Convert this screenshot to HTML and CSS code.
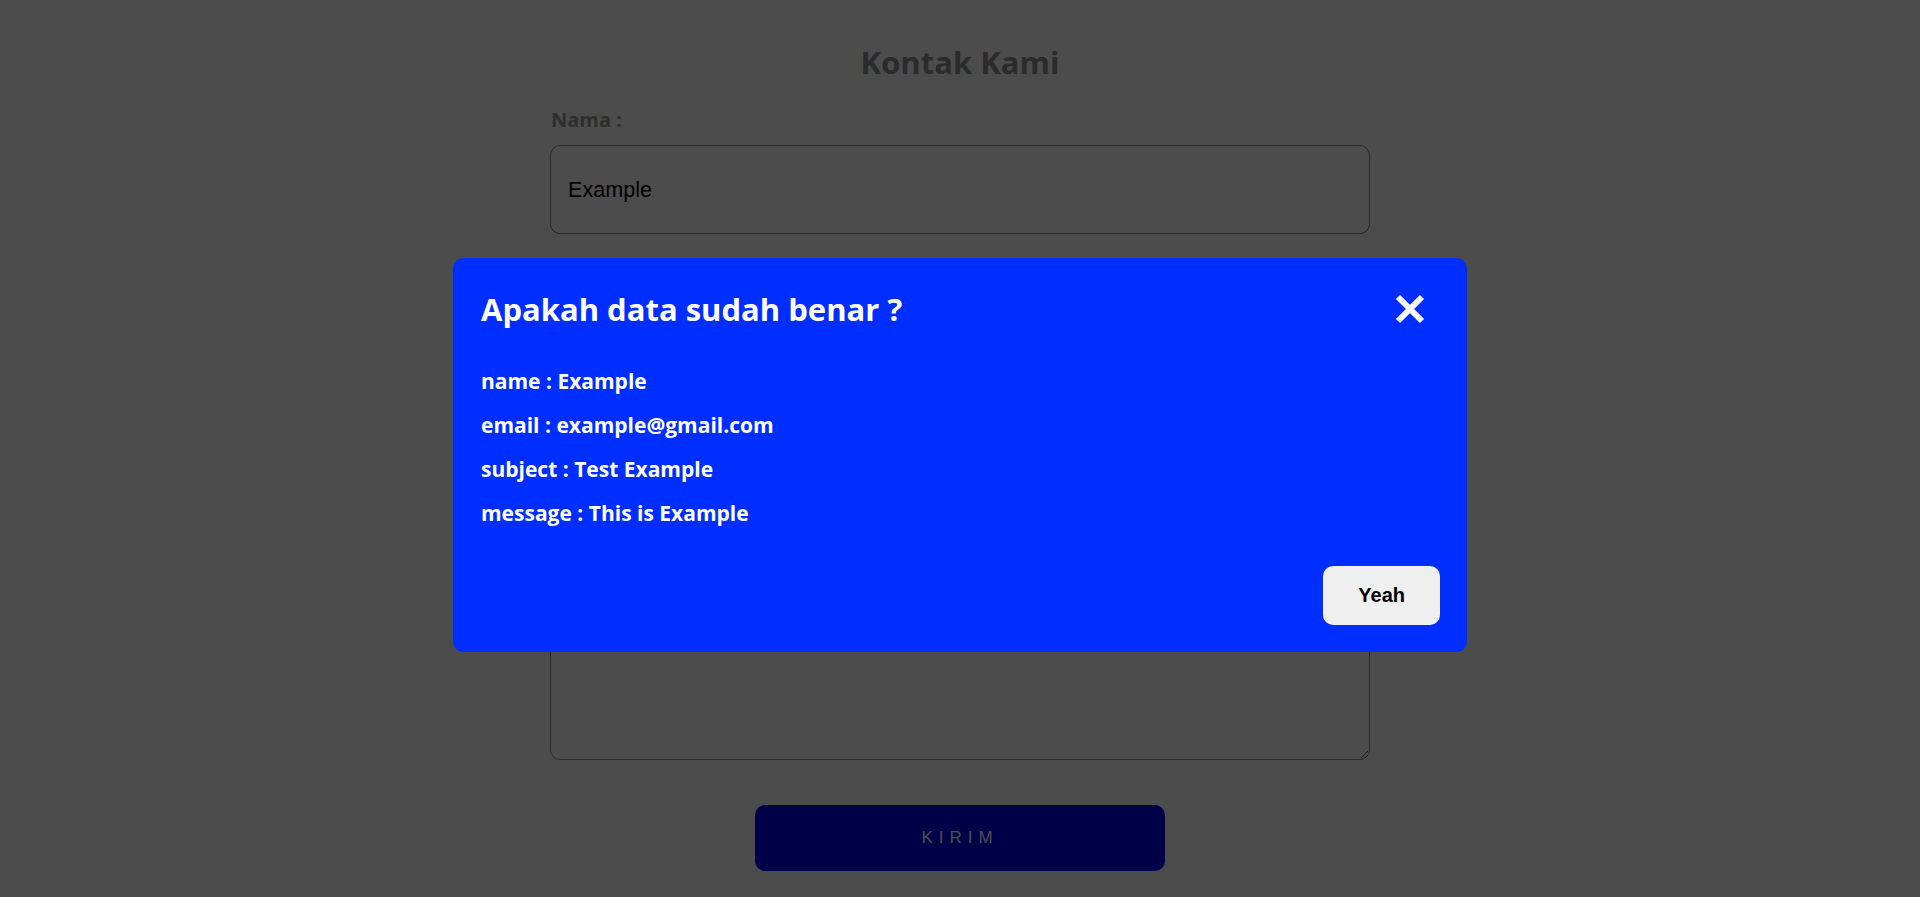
FILE: index.html
```html
<!DOCTYPE html>
<html lang="id">
<head>
<meta charset="utf-8">
<title>Kontak Kami</title>
<link rel="stylesheet" href="styles.css">
</head>
<body>
<main class="page">
  <h1 class="page-title">Kontak Kami</h1>
  <form class="contact-form">
    <div class="field">
      <label class="field-label" for="nama">Nama :</label>
      <input class="field-input" id="nama" type="text" value="Example">
    </div>
    <div class="field">
      <label class="field-label" for="email">Email :</label>
      <input class="field-input" id="email" type="text">
    </div>
    <div class="field">
      <label class="field-label" for="subjek">Subjek :</label>
      <input class="field-input" id="subjek" type="text">
    </div>
    <div class="field">
      <label class="field-label" for="pesan">Pesan :</label>
      <textarea class="field-textarea" id="pesan"></textarea>
    </div>
    <div class="submit-row">
      <button class="submit-btn" type="button">KIRIM</button>
    </div>
  </form>
</main>

<div class="overlay">
  <div class="modal">
    <div class="modal-header">
      <h2 class="modal-title">Apakah data sudah benar ?</h2>
      <button class="modal-close" type="button" aria-label="Tutup">
        <svg width="32" height="32" viewBox="0 0 32 32"><path d="M4 4 L28 28 M28 4 L4 28" stroke="#fff" stroke-width="6" fill="none"/></svg>
      </button>
    </div>
    <div class="modal-body">
      <p class="modal-item">name : Example</p>
      <p class="modal-item">email : example@gmail.com</p>
      <p class="modal-item">subject : Test Example</p>
      <p class="modal-item">message : This is Example</p>
    </div>
    <div class="modal-footer">
      <button class="modal-ok" type="button">Yeah</button>
    </div>
  </div>
</div>
</body>
</html>
```

FILE: styles.css
```css
* { box-sizing: border-box; }

body {
  margin: 0;
  background: #ffffff;
  font-family: "Open Sans", "Noto Sans", sans-serif;
  height: 897px;
  overflow: hidden;
}

.page {
  width: 820px;
  margin: 0 auto;
  padding-top: 40px;
}

.page-title {
  margin: 0;
  text-align: center;
  font-size: 31px;
  line-height: 44px;
  font-weight: 700;
  color: #8f8f8f;
}

.contact-form {
  display: flex;
  flex-direction: column;
  margin-top: 24px;
}

.field {
  display: flex;
  flex-direction: column;
  margin-bottom: 30px;
}

.field-label {
  font-size: 20px;
  line-height: 24px;
  font-weight: 700;
  color: #999999;
  margin-bottom: 13px;
  padding-left: 1px;
}

.field-input {
  height: 89px;
  border: 1px solid #8a8a8a;
  border-radius: 10px;
  padding: 0 17px;
  font-family: "Liberation Sans", Arial, sans-serif;
  font-size: 21.6px;
  color: #000;
  background: #fff;
}

.field-textarea {
  height: 147px;
  border: 1px solid #8a8a8a;
  border-radius: 10px;
  padding: 17px;
  font-family: "Liberation Sans", Arial, sans-serif;
  font-size: 21.6px;
  color: #000;
  background: #fff;
  resize: vertical;
}

.submit-row {
  display: flex;
  justify-content: center;
  margin-top: 15px;
}

.submit-btn {
  width: 410px;
  height: 66px;
  border: none;
  border-radius: 10px;
  background: #0000f0;
  color: #fff;
  font-family: "Liberation Sans", Arial, sans-serif;
  font-size: 17px;
  letter-spacing: 6px;
  padding-left: 6px;
}

.overlay {
  position: fixed;
  inset: 0;
  background: rgba(0, 0, 0, 0.7);
  display: flex;
  justify-content: center;
  align-items: flex-start;
  padding-top: 258px;
}

.modal {
  width: 1014px;
  background: #002eff;
  border-radius: 10px;
  padding: 27px 27px 27px 28px;
  display: flex;
  flex-direction: column;
  color: #fff;
}

.modal-header {
  display: flex;
  justify-content: space-between;
  align-items: center;
  height: 48px;
}

.modal-title {
  margin: 0;
  font-size: 31px;
  line-height: 48px;
  font-weight: 700;
}

.modal-close {
  background: none;
  border: none;
  padding: 0;
  margin-right: 14px;
  width: 32px;
  height: 32px;
  display: flex;
}

.modal-body {
  display: flex;
  flex-direction: column;
  gap: 20px;
  margin-top: 36px;
}

.modal-item {
  margin: 0;
  font-size: 21px;
  line-height: 24px;
  font-weight: 700;
}

.modal-footer {
  display: flex;
  justify-content: flex-end;
  margin-top: 41px;
}

.modal-ok {
  border: none;
  border-radius: 10px;
  background: #efefef;
  color: #000;
  font-family: "Liberation Sans", Arial, sans-serif;
  font-size: 20px;
  line-height: 23px;
  font-weight: 700;
  padding: 18px 35px;
}
```
